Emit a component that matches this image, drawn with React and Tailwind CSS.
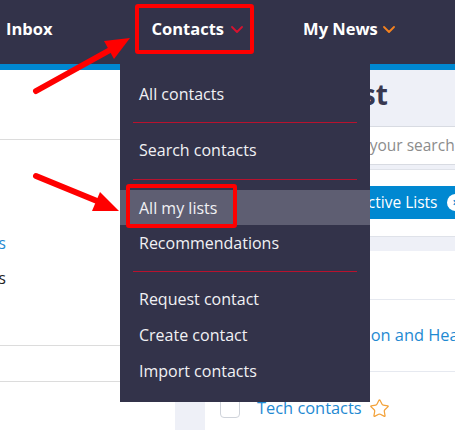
import React from "react";
import { Star } from "lucide-react";

/* little nav chevron */
function Chevron({ color }) {
  return (
    <svg width="12" height="7" viewBox="0 0 12 7" fill="none" stroke={color} strokeWidth="1.8" strokeLinecap="round" strokeLinejoin="round">
      <path d="M1 1l5 5 5-5" />
    </svg>
  );
}

function MenuItem({ children, active }) {
  return (
    <div className={active ? "flex h-[35px] items-center bg-[#5e5e72] px-[19px]" : "flex h-[36px] items-center px-[19px]"}>
      {children}
    </div>
  );
}

function Checkbox() {
  return <span className="h-[20px] w-[20px] shrink-0 rounded-[4px] border border-[#cfd3da] bg-white" />;
}

export default function App() {
  return (
    <div className="relative h-[430px] w-[455px] overflow-hidden bg-white font-['Open_Sans',sans-serif]">
      {/* top nav */}
      <header className="flex h-[64px] items-center bg-[#33334a] pb-[5px] text-[16.5px] font-bold text-white">
        <span className="ml-[6px]">Inbox</span>
        <span className="ml-[99px] flex items-center gap-[7px]">
          Contacts <Chevron color="#d8122f" />
        </span>
        <span className="ml-[60px] flex items-center gap-[5px]">
          My News <Chevron color="#f5821f" />
        </span>
      </header>
      <div className="h-[6px] bg-[#0088d1]" />

      <div className="flex w-[560px]">
        {/* sidebar */}
        <aside className="w-[175px] shrink-0 bg-white text-[15.5px]">
          <div className="h-[70px] border-b border-[#dcdcdc]" />
          <div className="h-[206px] border-b border-[#dcdcdc] pt-[91px]">
            <div className="flex w-[6px] justify-end whitespace-nowrap leading-[24px] text-[#1f8ad2]">My lists</div>
            <div className="mt-[11px] flex w-[6px] justify-end whitespace-nowrap leading-[24px] text-[#222]">Shared lists</div>
          </div>
          <div className="h-[36px] border-b border-[#dcdcdc]" />
        </aside>

        {/* main */}
        <main className="flex-1 bg-[#eef0f7] pl-[30px]">
          <h1 className="h-[56px] pl-[16px] pt-[7px] text-[28px] font-bold leading-[34px] text-[#383850]">Contact List</h1>
          <div className="flex h-[39px] items-center border border-[#d8dbe2] bg-white pl-[121px] text-[15.5px] text-[#8c8c8c]">
            Enter your search term
          </div>
          <div className="mt-[4px] h-[68px] border-y border-[#dfe2e9] bg-white pl-[140px] pt-[16px]">
            <span className="inline-flex h-[33px] items-center gap-[10px] bg-[#0088d1] pl-[13px] pr-[8px] text-[15.5px] text-white">
              Active Lists
              <span className="flex h-[17px] w-[17px] items-center justify-center rounded-full bg-white text-[12px] font-bold leading-none text-[#0088d1]">×</span>
            </span>
          </div>
          <div className="mt-[14px] bg-white text-[16.4px] text-[#1f8ad2]">
            <div className="h-[49px] border-b border-[#e6e9f0]" />
            <div className="flex h-[72px] items-center border-b border-[#e6e9f0] pl-[15px]">
              <Checkbox />
              <span className="ml-[13px] whitespace-nowrap">Science Education and Health</span>
            </div>
            <div className="flex h-[72px] items-center pl-[15px]">
              <Checkbox />
              <span className="ml-[17px] whitespace-nowrap">Tech contacts</span>
              <Star className="ml-[7px]" size={21} strokeWidth={1.4} color="#f3a23a" />
            </div>
          </div>
        </main>
      </div>

      {/* contacts dropdown */}
      <div className="absolute left-[120px] top-[64px] h-[338px] w-[250px] bg-[#33334a] pt-[12px] text-[16px] text-[#f1f1f4]">
        <MenuItem>All contacts</MenuItem>
        <div className="mx-[13px] mb-[9px] mt-[10px] h-px bg-[#b8122e]" />
        <MenuItem>Search contacts</MenuItem>
        <div className="mx-[13px] mb-[10px] mt-[11px] h-px bg-[#b8122e]" />
        <MenuItem active>All my lists</MenuItem>
        <MenuItem>Recommendations</MenuItem>
        <div className="mx-[13px] mb-[9px] mt-[10px] h-px bg-[#b8122e]" />
        <MenuItem>Request contact</MenuItem>
        <MenuItem>Create contact</MenuItem>
        <MenuItem>Import contacts</MenuItem>
      </div>

      {/* annotation boxes */}
      <div className="absolute left-[135px] top-[4px] h-[50px] w-[119px] rounded-[3px] border-[4px] border-[#ff0000]" />
      <div className="absolute left-[126px] top-[184px] h-[44px] w-[111px] rounded-[3px] border-[4px] border-[#ff0000]" />

      {/* annotation arrows */}
      <svg className="pointer-events-none absolute left-0 top-0" width="455" height="430" viewBox="0 0 455 430">
        <g stroke="#ff0000" strokeWidth="6" strokeLinecap="round">
          <line x1="36" y1="91" x2="110" y2="50" />
          <line x1="36" y1="176" x2="97" y2="201" />
        </g>
        <g fill="#ff0000">
          <polygon points="130,38 104,41 114,59" />
          <polygon points="119,211 92,211 100,192" />
        </g>
      </svg>
    </div>
  );
}
